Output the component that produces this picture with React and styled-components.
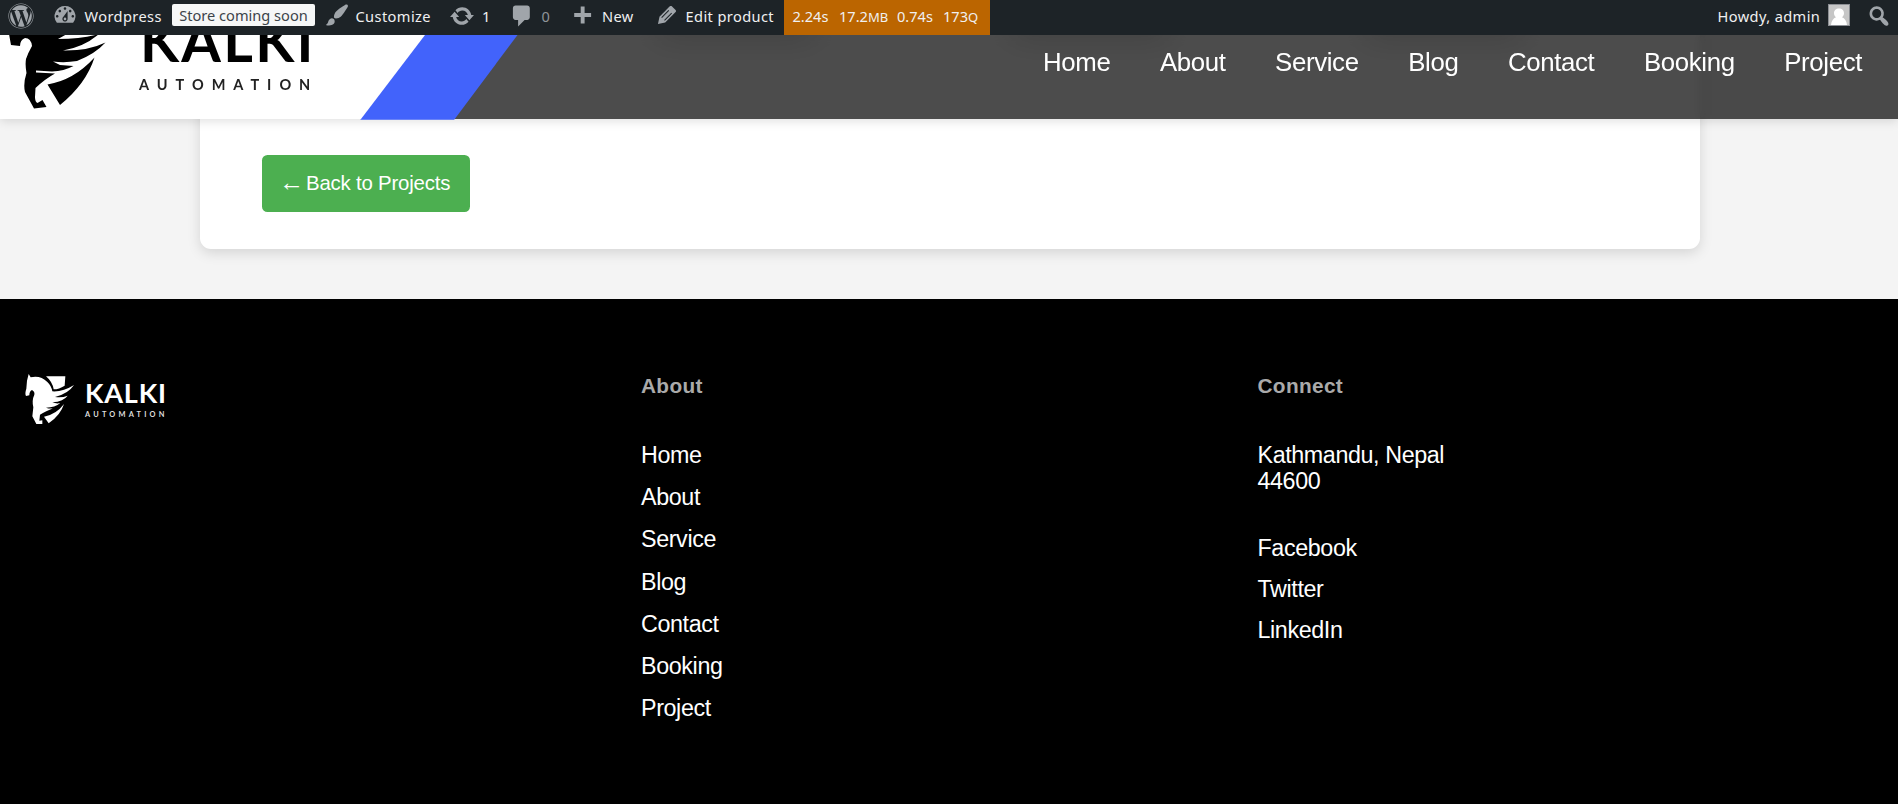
import React from 'react';
import styled, { createGlobalStyle } from 'styled-components';
import { FaWordpress } from 'react-icons/fa';

const GlobalStyle = createGlobalStyle`
  * { box-sizing: border-box; }
  html, body { margin: 0; height: 804px; overflow: hidden; background: #000; }
  body { font-family: "Liberation Sans", Arial, sans-serif; color: #fff; }
  a { color: inherit; text-decoration: none; }
  ul { list-style: none; margin: 0; padding: 0; }
`;

/* ---------- admin bar ---------- */

const AdminBar = styled.div`
  position: fixed;
  inset: 0 0 auto 0;
  z-index: 20;
  height: 35px;
  display: flex;
  background: #1d2327;
  color: #f0f0f1;
  font: 14.6px/32px "Noto Sans", sans-serif;
  white-space: nowrap;
`;

const BarItem = styled.a`
  display: flex;
  flex: none;
  width: ${(p) => p.$w}px;
  padding-left: ${(p) => p.$pad || 0}px;
  letter-spacing: 0.4px;
  color: ${(p) => (p.$dim ? '#8f9499' : 'inherit')};
`;

const BarIcon = styled.svg`
  flex: none;
  width: 26px;
  height: 26px;
  margin: ${(p) => p.$top || 3}px ${(p) => p.$gap || 0}px 0 0;
  fill: #a0a5aa;
`;

const WpMark = styled(FaWordpress)`
  width: 26px;
  height: 26px;
  margin-top: 2.5px;
  color: #a0a5aa;
`;

const StoreBadge = styled.span`
  height: 22px;
  width: 143px;
  margin-top: 4px;
  border-radius: 2px;
  background: #f6f7f7;
  color: #3c434a;
  text-align: center;
  line-height: 22px;
  letter-spacing: 0;
`;

const Stats = styled.div`
  display: flex;
  flex: none;
  width: 206px;
  padding-left: 8.5px;
  background: #bb6500;
  letter-spacing: 0;
`;

const Stat = styled.span`
  width: ${(p) => p.$w}px;
  small { font-size: 13px; }
`;

const Spacer = styled.div`
  flex: 1;
`;

const Avatar = styled.svg`
  width: 22px;
  height: 22px;
  margin-top: 4px;
  border: 1px solid #8c8f94;
  background: #c6c6c6;
`;

const icons = {
  dashboard:
    'M3.76 16h12.48A7.998 7.998 0 0 0 10 3a7.998 7.998 0 0 0-6.24 13zM10 4c.55 0 1 .45 1 1s-.45 1-1 1-1-.45-1-1 .45-1 1-1zM6 6c.55 0 1 .45 1 1s-.45 1-1 1-1-.45-1-1 .45-1 1-1zm8 0c.55 0 1 .45 1 1s-.45 1-1 1-1-.45-1-1 .45-1 1-1zm-5.37 5.55L12 7v6c0 1.1-.9 2-2 2s-2-.9-2-2c0-.57.24-1.08.63-1.45zM4 10c.55 0 1 .45 1 1s-.45 1-1 1-1-.45-1-1 .45-1 1-1zm12 0c.55 0 1 .45 1 1s-.45 1-1 1-1-.45-1-1 .45-1 1-1zm-5 3c0-.55-.45-1-1-1s-1 .45-1 1 .45 1 1 1 1-.45 1-1z',
  brush:
    'M18.33 3.57s.27-.8-.31-1.36c-.53-.52-1.22-.24-1.22-.24-.61.3-5.76 3.47-7.67 5.57-.86.96-2.06 3.79-1.09 4.82.92.98 3.96-.17 4.79-1 2.06-2.06 5.21-7.17 5.5-7.79zM1.4 17.65c2.37-1.56 1.46-3.41 3.23-4.64.93-.65 2.22-.62 3.08.29.63.67.8 2.57-.16 3.46-1.57 1.45-4 1.55-6.15.89z',
  update:
    'M10.2 3.28c3.53 0 6.43 2.61 6.92 6h2.08l-3.5 4-3.5-4h2.32c-.45-1.97-2.21-3.45-4.32-3.45-1.45 0-2.73.71-3.54 1.78L4.95 5.66C6.23 4.2 8.11 3.28 10.2 3.28zm-.4 13.44c-3.52 0-6.43-2.61-6.92-6H.8l3.5-4c1.17 1.33 2.33 2.67 3.5 4H5.48c.45 1.97 2.21 3.45 4.32 3.45 1.45 0 2.73-.71 3.54-1.78l1.71 1.95c-1.28 1.46-3.15 2.38-5.25 2.38z',
  comment: 'M5 2h9c1.1 0 2 .9 2 2v7c0 1.1-.9 2-2 2h-2l-5 5v-5H5c-1.1 0-2-.9-2-2V4c0-1.1.9-2 2-2z',
  plus: 'M17 7v3h-5v5H9v-5H4V7h5V2h3v5h5z',
  edit:
    'M13.89 3.39l2.71 2.72c.46.46.42 1.24.03 1.64l-8.01 8.02-5.56 1.16 1.16-5.58s7.6-7.63 7.99-8.03c.39-.39 1.22-.39 1.68.07zM11.1 6.1l-5.5 5.6.55.55 5.5-5.6zM13.3 8.3l-5.5 5.6.55.55 5.5-5.6z',
  search:
    'M12.14 4.18c1.87 1.87 2.11 4.75.72 6.89.12.1.22.21.36.31.2.16.47.36.81.59.34.24.56.39.66.47.42.31.73.57.94.78.32.32.6.65.84 1 .25.35.44.69.59 1.04.14.35.21.68.18 1-.02.32-.14.59-.36.81s-.49.34-.81.36c-.31.02-.65-.04-.99-.19-.35-.14-.7-.34-1.04-.59-.35-.24-.68-.52-1-.84-.21-.21-.47-.52-.77-.93-.1-.13-.25-.35-.47-.66-.22-.32-.4-.57-.56-.78-.16-.2-.29-.35-.44-.5-2.07 1.09-4.69.76-6.44-.98-2.14-2.15-2.14-5.64 0-7.78 2.15-2.15 5.63-2.15 7.78 0zm-1.41 6.36c1.36-1.37 1.36-3.58 0-4.95-1.37-1.37-3.59-1.37-4.95 0-1.37 1.37-1.37 3.58 0 4.95 1.36 1.37 3.58 1.37 4.95 0z',
};

const Icon = ({ name, top, gap }) => (
  <BarIcon viewBox="0 0 20 20" $top={top} $gap={gap}>
    <path fillRule="evenodd" d={icons[name]} />
  </BarIcon>
);

/* ---------- site header ---------- */

const SiteHeader = styled.header`
  position: fixed;
  inset: 35px 0 auto 0;
  z-index: 10;
  height: 84px;
  display: flex;
  justify-content: space-between;
  background: rgba(0, 0, 0, 0.7);
  backdrop-filter: blur(5px);
  box-shadow: 0 2px 10px rgba(0, 0, 0, 0.13);
`;

const Stripe = styled.div`
  flex: none;
  width: 518px;
  height: 84.7px;
  background: #4263fb;
  clip-path: polygon(0 0, 517.5px 0, 454.2px 100%, 360.5px 100%, 360.5px 84px, 0 84px);
`;

const Brand = styled.a`
  display: flex;
  width: 425px;
  height: 84px;
  background: #fff;
  color: #000;
  clip-path: polygon(0 0, 425px 0, 361px 100%, 0 100%);
`;

const HorseDark = styled.svg`
  flex: none;
  width: 139px;
  height: 84px;
`;

const BrandText = styled.div`
  display: flex;
  flex-direction: column;
  font-family: Lato, sans-serif;
  white-space: nowrap;
`;

const HeaderName = styled.span`
  height: 58px;
  margin: -24px 0 0 1px;
  font-size: 57px;
  font-weight: 700;
  line-height: 58px;
  letter-spacing: 2.3px;
`;

const HeaderTag = styled.span`
  margin-top: 7px;
  font-size: 14.5px;
  font-weight: 700;
  line-height: 18px;
  letter-spacing: 8px;
  color: #222;
`;

const Nav = styled.nav`
  display: flex;
  gap: 49.5px;
  padding: 11px 36px 0 0;
  font-size: 25.8px;
  line-height: 32px;
  letter-spacing: -0.35px;
`;

/* ---------- page body ---------- */

const Main = styled.main`
  height: 299px;
  padding: 0 198px 50px 200px;
  background: #f4f4f4;
`;

const Card = styled.section`
  height: 249px;
  display: flex;
  flex-direction: column;
  justify-content: space-between;
  align-items: flex-start;
  padding: 0 62px 37px;
  border-radius: 0 0 11px 11px;
  background: #fff;
  box-shadow: 0 4px 13px rgba(0, 0, 0, 0.13);
`;

const Gallery = styled.div`
  display: flex;
  gap: 198px;
  padding-left: 396px;
`;

const Thumb = styled.div`
  width: 156px;
  height: 26px;
  background: #fff;
  box-shadow: 0 8px 32px rgba(0, 0, 0, 0.22);
`;

const BackButton = styled.a`
  display: flex;
  width: 208px;
  height: 57px;
  padding-left: 17px;
  border-radius: 5.5px;
  background: #4caf50;
  font-size: 20.4px;
  line-height: 56px;
  letter-spacing: -0.2px;
  white-space: nowrap;
`;

const Arrow = styled.span`
  width: 27px;
  font-family: "Liberation Serif", serif;
  font-size: 25px;
  line-height: 55px;
`;

/* ---------- footer ---------- */

const Footer = styled.footer`
  height: 505px;
  display: grid;
  grid-template-columns: 616px 616.5px 1fr;
  padding: 74px 0 0 25px;
  background: #000;
`;

const FooterBrand = styled.a`
  display: flex;
  align-items: flex-start;
  height: 62px;
`;

const HorseLight = styled.svg`
  flex: none;
  width: 64px;
  height: 62px;
  margin: -5px 0 0 -7px;
`;

const FooterName = styled.span`
  height: 28px;
  margin: 6px 0 0 3px;
  font-size: 27px;
  font-weight: 700;
  line-height: 28px;
  letter-spacing: 0.8px;
`;

const FooterTag = styled.span`
  margin: 3px 0 0 3px;
  font-size: 7.4px;
  font-weight: 700;
  line-height: 10px;
  letter-spacing: 3.2px;
  color: #ddd;
`;

const Heading = styled.h3`
  margin: 0 0 35px;
  color: #aaa;
  font-size: 20.8px;
  line-height: 26px;
  letter-spacing: 0.35px;
`;

const Links = styled.ul`
  display: flex;
  flex-direction: column;
  font-size: 23.3px;
  line-height: ${(p) => p.$pitch}px;
  letter-spacing: -0.38px;
`;

const Address = styled.p`
  margin: 43px 0 34px;
  font-size: 23.3px;
  line-height: 26px;
  letter-spacing: -0.4px;
`;

const pages = ['Home', 'About', 'Service', 'Blog', 'Contact', 'Booking', 'Project'];
const social = ['Facebook', 'Twitter', 'LinkedIn'];

export default function App() {
  return (
    <>
      <GlobalStyle />
      <AdminBar>
        <BarItem $w={51.5} $pad={8}><WpMark /></BarItem>
        <BarItem $w={120.5}><Icon name="dashboard" top={2} gap={7} />Wordpress</BarItem>
        <BarItem $w={152}><StoreBadge>Store coming soon</StoreBadge></BarItem>
        <BarItem $w={125}><Icon name="brush" top={2} gap={5.5} />Customize</BarItem>
        <BarItem $w={60}><Icon name="update" gap={7} />1</BarItem>
        <BarItem $w={60} $dim><Icon name="comment" gap={6.5} />0</BarItem>
        <BarItem $w={84.5}><Icon name="plus" top={4} gap={7} />New</BarItem>
        <BarItem $w={130.5}><Icon name="edit" top={2} gap={6} />Edit product</BarItem>
        <Stats>
          <Stat $w={46.5}>2.24s</Stat>
          <Stat $w={58}>17.2<small>MB</small></Stat>
          <Stat $w={46}>0.74s</Stat>
          <Stat $w={40}>173<small>Q</small></Stat>
        </Stats>
        <Spacer />
        <BarItem $w={110.5}>Howdy, admin</BarItem>
        <BarItem $w={38}>
          <Avatar viewBox="0 0 20 20">
            <path fill="#fff" d="M10 3.5c3 0 5 2 5 4.8 0 1.7-.8 3.1-2 4 2.7 1 4.5 3.5 5 7.7H2c.5-4.2 2.3-6.7 5-7.7-1.2-.9-2-2.3-2-4 0-2.8 2-4.8 5-4.8z" />
          </Avatar>
        </BarItem>
        <BarItem $w={32}><Icon name="search" /></BarItem>
      </AdminBar>

      <SiteHeader>
        <Stripe>
          <Brand>
            <HorseDark viewBox="0 35 139 84">
              <path d="M9 34L11 45L20 46Q20 40 25 38Q31 38 32 46Q28 53 26 59Q25 65 26.5 73Q23 84 25 92L34 108.5L46.5 107L42.5 100L37.5 103Q35 102 35 97L35.5 88Q45 79 55 73.5L36 72.5L36 70.5L52 71.5Q64 71 73.5 66L60 65L53 61.5Q65 63 77 61Q95 54 105.5 42.5Q88 51 63 50.5Q84 47 99 34Q82 39 58 39L67 34Z" />
              <path d="M47.5 84.5Q74 80 94.5 57.5Q86 84 60 105Z" />
            </HorseDark>
            <BrandText>
              <HeaderName>KALKI</HeaderName>
              <HeaderTag>AUTOMATION</HeaderTag>
            </BrandText>
          </Brand>
        </Stripe>
        <Nav>
          {pages.map((p) => <a key={p} href="#">{p}</a>)}
        </Nav>
      </SiteHeader>

      <Main>
        <Card>
          <Gallery><Thumb /><Thumb /><Thumb /></Gallery>
          <BackButton href="#"><Arrow>←</Arrow>Back to Projects</BackButton>
        </Card>
      </Main>

      <Footer>
        <FooterBrand>
          <HorseLight viewBox="0 0 192 186" fill="#fff">
            <path d="M32 18L38 28Q67 21 88 42Q100 53 103 70Q135 72 168 51Q151 77 111 87Q132 90 149 83Q137 100 103 103Q116 108 127 105Q111 119 84 119Q99 124 110 119Q82 130 66 140L64 158L73 157L73 168L55 168L43 145L46 118Q41 97 49 80Q51 71 42 66Q34 70 34 82L24 84Q20 77 25 62L27 38Z" />
            <path d="M84 25H142L140 53Q123 64 107 64Q103 41 84 25Z" />
            <path d="M78 146Q114 140 138 108Q128 141 92 166Z" />
          </HorseLight>
          <BrandText>
            <FooterName>KALKI</FooterName>
            <FooterTag>AUTOMATION</FooterTag>
          </BrandText>
        </FooterBrand>
        <div>
          <Heading>About</Heading>
          <Links $pitch={42.2}>
            {pages.map((p) => <li key={p}><a href="#">{p}</a></li>)}
          </Links>
        </div>
        <div>
          <Heading>Connect</Heading>
          <Address>Kathmandu, Nepal<br />44600</Address>
          <Links $pitch={41.1}>
            {social.map((s) => <li key={s}><a href="#">{s}</a></li>)}
          </Links>
        </div>
      </Footer>
    </>
  );
}
